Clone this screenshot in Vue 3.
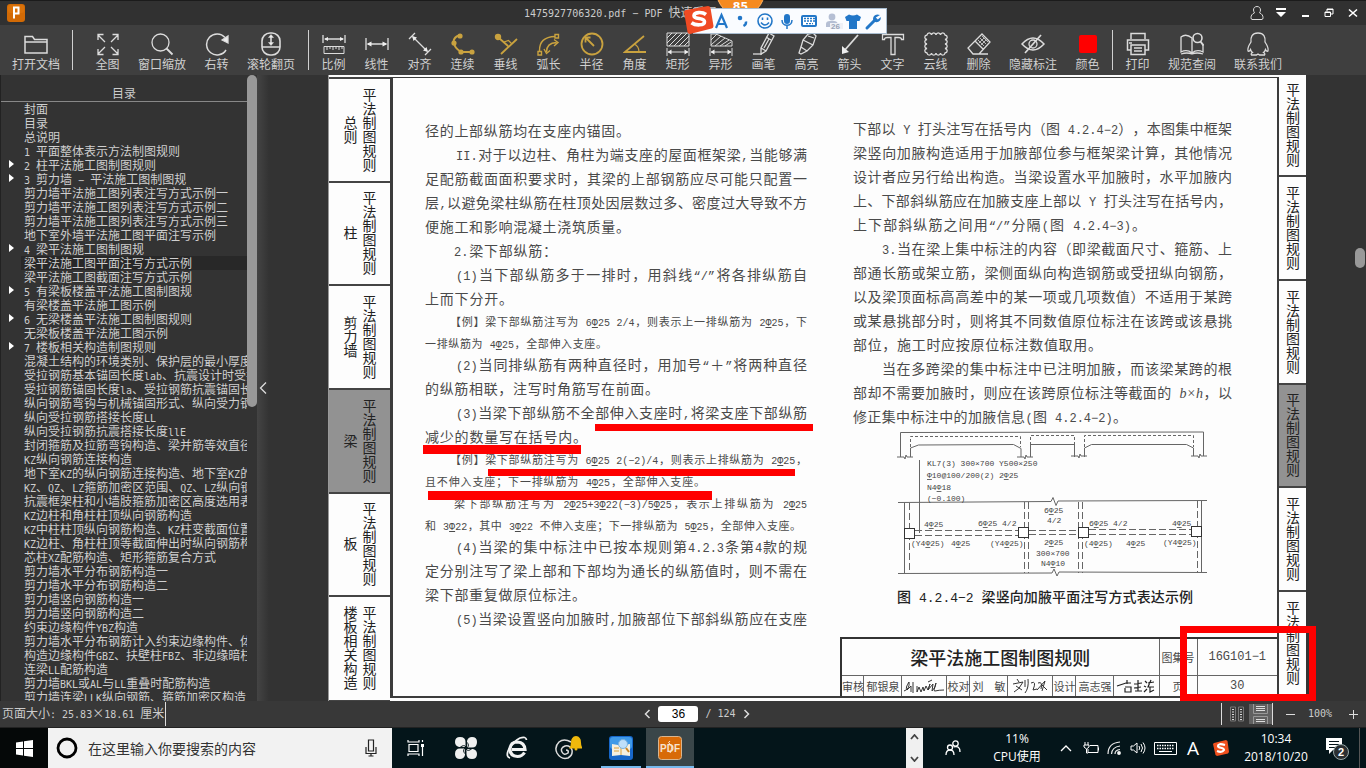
<script setup>
import { ref } from 'vue'

const page = ref('36')
const query = ref('')

const pattern = /Φ|b×h|(?:(?!b×h)[\x20-\x7e−“”])+|[^\x20-\x7e−“”Φ]+/g
function runs(text) {
  return (text.match(pattern) || []).map((t) => ({
    t,
    k: t === 'Φ' ? 'bar' : t === 'b×h' ? 'math' : /^[\x20-\x7e−“”]/.test(t) ? 'lat' : 'han'
  }))
}

const Y = '#c9a23f'
const groupOpen = [{ id: 'open', label: '打开文档', wide: true }]
const groupView = [
  { id: 'full', label: '全图' },
  { id: 'zoom', label: '窗口缩放', wide: true },
  { id: 'rotate', label: '右转' },
  { id: 'mouse', label: '滚轮翻页', wide: true }
]
const groupTools = [
  { id: 'scale', label: '比例' },
  { id: 'linear', label: '线性' },
  { id: 'align', label: '对齐' },
  { id: 'chain', label: '连续' },
  { id: 'perp', label: '垂线' },
  { id: 'arc', label: '弧长' },
  { id: 'radius', label: '半径' },
  { id: 'angle', label: '角度' },
  { id: 'rect', label: '矩形' },
  { id: 'poly', label: '异形' },
  { id: 'pen', label: '画笔' },
  { id: 'marker', label: '高亮' },
  { id: 'arrow', label: '箭头' },
  { id: 'text', label: '文字' },
  { id: 'cloud', label: '云线' },
  { id: 'erase', label: '删除' },
  { id: 'hide', label: '隐藏标注', wide: true },
  { id: 'color', label: '颜色' }
]
const groupEnd = [
  { id: 'print', label: '打印' },
  { id: 'book', label: '规范查阅', wide: true },
  { id: 'contact', label: '联系我们', wide: true }
]
const groups = [groupOpen, groupView, groupTools, groupEnd]

const outline = [
  '封面', '目录', '总说明', '1 平面整体表示方法制图规则', '>2 柱平法施工图制图规则',
  '>3 剪力墙 − 平法施工图制图规', '剪力墙平法施工图列表注写方式示例一', '剪力墙平法施工图列表注写方式示例二',
  '剪力墙平法施工图列表注写方式示例三', '地下室外墙平法施工图平面注写示例', '>4 梁平法施工图制图规',
  '梁平法施工图平面注写方式示例', '梁平法施工图截面注写方式示例', '>5 有梁板楼盖平法施工图制图规',
  '有梁楼盖平法施工图示例', '>6 无梁楼盖平法施工图制图规则', '无梁板楼盖平法施工图示例',
  '>7 楼板相关构造制图规则', '混凝土结构的环境类别、保护层的最小厚度', '受拉钢筋基本锚固长度lab、抗震设计时受拉',
  '受拉钢筋锚固长度la、受拉钢筋抗震锚固长度', '纵向钢筋弯钩与机械锚固形式、纵向受力钢筋', '纵向受拉钢筋搭接长度LL',
  '纵向受拉钢筋抗震搭接长度llE', '封闭箍筋及拉筋弯钩构造、梁并筋等效直径', 'KZ纵向钢筋连接构造',
  '地下室KZ的纵向钢筋连接构造、地下室KZ的', 'KZ、QZ、LZ箍筋加密区范围、QZ、LZ纵向钢筋', '抗震框架柱和小墙肢箍筋加密区高度选用表',
  'KZ边柱和角柱柱顶纵向钢筋构造', 'KZ中柱柱顶纵向钢筋构造、KZ柱变截面位置', 'KZ边柱、角柱柱顶等截面伸出时纵向钢筋构造',
  '芯柱XZ配筋构造、矩形箍筋复合方式', '剪力墙水平分布钢筋构造一', '剪力墙水平分布钢筋构造二', '剪力墙竖向钢筋构造一',
  '剪力墙竖向钢筋构造二', '约束边缘构件YBZ构造', '剪力墙水平分布钢筋计入约束边缘构件、体积', '构造边缘构件GBZ、扶壁柱FBZ、非边缘暗柱',
  '连梁LL配筋构造', '剪力墙BKL或AL与LL重叠时配筋构造', '剪力墙连梁LLK纵向钢筋、箍筋加密区构造'
].map((s, i) => ({ text: s.replace('>', ''), parent: s[0] === '>', active: i === 11 }))

const leftTabs = ['总则', '柱', '剪力墙', '梁', '板', '楼板相关构造']

/* t: text, i: indent, w: width of the set line, s: small print */
const leftLines = [
  { t: '径的上部纵筋均在支座内锚固。', w: 205 },
  { t: 'II.对于以边柱、角柱为端支座的屋面框架梁,当能够满', i: 31, w: 382 },
  { t: '足配筋截面面积要求时，其梁的上部钢筋应尽可能只配置一', w: 382 },
  { t: '层,以避免梁柱纵筋在柱顶处因层数过多、密度过大导致不方', w: 382 },
  { t: '便施工和影响混凝土浇筑质量。', w: 205 },
  { t: '2.梁下部纵筋：', i: 29, w: 132 },
  { t: '(1)当下部纵筋多于一排时，用斜线“/”将各排纵筋自', i: 31, w: 382 },
  { t: '上而下分开。', w: 88 },
  { t: '【例】梁下部纵筋注写为 6Φ25 2/4，则表示上一排纵筋为 2Φ25，下', i: 25, w: 382, s: true },
  { t: '一排纵筋为 4Φ25，全部伸入支座。', w: 182, s: true },
  { t: '(2)当同排纵筋有两种直径时，用加号“＋”将两种直径', i: 31, w: 382 },
  { t: '的纵筋相联，注写时角筋写在前面。', w: 234 },
  { t: '(3)当梁下部纵筋不全部伸入支座时,将梁支座下部纵筋', i: 31, w: 382 },
  { t: '减少的数量写在括号内。', w: 162 },
  { t: '【例】梁下部纵筋注写为 6Φ25 2(−2)/4，则表示上排纵筋为 2Φ25，', i: 25, w: 382, s: true },
  { t: '且不伸入支座；下一排纵筋为 4Φ25，全部伸入支座。', w: 280, s: true },
  { t: '梁下部纵筋注写为 2Φ25+3Φ22(−3)/5Φ25，表示上排纵筋为 2Φ25', i: 29, w: 382, s: true },
  { t: '和 3Φ22，其中 3Φ22 不伸入支座；下一排纵筋为 5Φ25，全部伸入支座。', w: 376, s: true },
  { t: '(4)当梁的集中标注中已按本规则第4.2.3条第4款的规', i: 31, w: 382 },
  { t: '定分别注写了梁上部和下部均为通长的纵筋值时，则不需在', w: 382 },
  { t: '梁下部重复做原位标注。', w: 161 },
  { t: '(5)当梁设置竖向加腋时,加腋部位下部斜纵筋应在支座', i: 31, w: 382 }
]
const rightLines = [
  { t: '下部以 Y 打头注写在括号内（图 4.2.4−2），本图集中框架', w: 379 },
  { t: '梁竖向加腋构造适用于加腋部位参与框架梁计算，其他情况', w: 379 },
  { t: '设计者应另行给出构造。当梁设置水平加腋时，水平加腋内', w: 379 },
  { t: '上、下部斜纵筋应在加腋支座上部以 Y 打头注写在括号内，', w: 379 },
  { t: '上下部斜纵筋之间用“/”分隔(图 4.2.4−3)。', w: 293 },
  { t: '3.当在梁上集中标注的内容（即梁截面尺寸、箍筋、上', i: 29, w: 379 },
  { t: '部通长筋或架立筋，梁侧面纵向构造钢筋或受扭纵向钢筋，', w: 379 },
  { t: '以及梁顶面标高高差中的某一项或几项数值）不适用于某跨', w: 379 },
  { t: '或某悬挑部分时，则将其不同数值原位标注在该跨或该悬挑', w: 379 },
  { t: '部位，施工时应按原位标注数值取用。', w: 249 },
  { t: '当在多跨梁的集中标注中已注明加腋，而该梁某跨的根', i: 29, w: 379 },
  { t: '部却不需要加腋时，则应在该跨原位标注等截面的 b×h，以', w: 379 },
  { t: '修正集中标注中的加腋信息(图 4.2.4−2)。', w: 274 }
]
const columns = [leftLines, rightLines]

const notes = [
  [927, 467, 'KL7(3) 300×700 Y500×250'], [927, 479, 'Φ10@100/200(2) 2Φ25'], [927, 491, 'N4Φ18'], [927, 502, '(−0.100)'],
  [924, 528, '4Φ25'], [978, 527, '6Φ25 4/2'], [1044, 514, '6Φ25'], [1047, 524, '4/2'], [1089, 527, '6Φ25 4/2'], [1172, 527, '4Φ25'],
  [911, 547, '(Y4Φ25)'], [951, 547, '4Φ25'], [990, 547, '(Y4Φ25)'], [1044, 546, '2Φ25'], [1084, 547, '(4Φ25)'],
  [1126, 547, '4Φ25'], [1163, 546, '(Y4Φ25)'], [1036, 557, '300×700'], [1041, 567, 'N4Φ10']
]
</script>

<template>
  <div class="app">
    <header class="titlebar">
      <svg class="logo" width="18" height="18" viewBox="0 0 18 18">
        <rect width="18" height="18" rx="3" fill="#d26a05" />
        <rect x="1" y="1" width="16" height="8" rx="2" fill="#e27a10" opacity=".5" />
        <path d="M7 14.500V3.500h4.500v6H7" fill="none" stroke="#fff" stroke-width="2" />
      </svg>
      <h1 class="title"><span v-for="(r, i) in runs('1475927706320.pdf − PDF 快速看图')" :key="i" :class="r.k">{{ r.t }}</span></h1>
      <div class="winbtns">
        <button aria-label="用户"><svg width="14" height="16" viewBox="0 0 14 16" fill="none" stroke="#ddd"><path d="M7 1.500c-2.200 0-3.500 1.500-3.500 3.500 0 1.200.5 2 1 2.800C2 9 1 10.500 1 12.500q0 2 1 2h10q1 0 1-2c0-2-1-3.500-3.500-4.700.5-.8 1-1.600 1-2.800 0-2-1.300-3.500-3.500-3.500z" /></svg></button>
        <button aria-label="菜单"><svg width="12" height="10" viewBox="0 0 12 10" fill="#fff"><path d="M1 0h10v2H1zM1 4h10L6 9z" /></svg></button>
        <button aria-label="最小化"><svg width="12" height="10" viewBox="0 0 12 10" fill="#fff"><path d="M3 7h7v2H3z" /></svg></button>
        <button aria-label="还原"><svg width="10" height="10" viewBox="0 0 10 10" fill="none" stroke="#fff"><path d="M3 3.500V1h6v5H7M3 1.500h6M1 4h5.500v4.500H1zM1 4.500h5.500" /></svg></button>
        <button aria-label="关闭"><svg width="10" height="10" viewBox="0 0 10 10" fill="none" stroke="#fff" stroke-width="1.600"><path d="M1 1.500l8 7M9 1.500l-8 7" /></svg></button>
      </div>
      <div class="badge">85</div>
      <div class="ime">
        <svg width="204" height="32" viewBox="0 0 204 32" fill="none">
          <path d="M3 7l22-4q2 0 2.500 2l3 18q0 2-2 2.500L7 31q-2 0-2.500-2L1 9q0-1.500 2-2z" fill="#f04a23" />
          <path d="M23 11.500c-4-3-12-2.500-12 1.200 0 4.300 10.500 1.300 10.500 6 0 4-9 4-13 1" stroke="#fff" stroke-width="3.600" />
          <g stroke="#2277c8" stroke-width="2">
            <path d="M33 25l5.500-13L44 25M35 21h7" stroke-width="2.200" />
            <circle cx="57" cy="15" r="1.300" fill="#2277c8" /><path d="M63 18.500q.5 3-2.500 4.500" stroke-width="2.400" />
            <circle cx="82" cy="18" r="7" stroke-width="1.600" /><path d="M78 19.500q4 5 8 0" stroke-width="1.500" /><path d="M79.500 14.500v2.500M84.500 14.500v2.500" stroke-width="1.600" />
            <rect x="102" y="12" width="4" height="8" rx="2" fill="#2277c8" /><path d="M99 17c0 7 10 7 10 0M104 22.500v3.500" stroke-width="1.500" />
            <rect x="119" y="13" width="14" height="10" rx="1" fill="#fff" /><path d="M121 15.500h11M121 18h11M123 20.600h7" stroke-width="1.300" stroke-dasharray="2 1" />
          </g>
          <g fill="#b5bfd4"><circle cx="149" cy="14" r="3.400" /><path d="M143 24v-3q0-3 4-3h4q3 0 4 3v3z" /></g>
          <rect x="147" y="20" width="13" height="6" fill="#eef0f6" />
          <text x="148" y="26" font-size="8" font-weight="700" fill="#98a3b8">26</text>
          <path d="M162 14l4-2.500q4 2 8 0l4 2.500-1.500 4h-2.500v8h-8v-8h-2.500z" fill="#2277c8" />
          <path d="M184 25l7-7" stroke="#2277c8" stroke-width="3" stroke-linecap="round" />
          <path d="M197 12q-4-1.500-6 1-2 3 0 5.500 3.500 2 6-1 1-1.500.8-3.500l-3 2.500-2-2z" fill="#2277c8" />
        </svg>
      </div>
    </header>

    <nav class="toolbar">
      <div v-for="(g, gi) in groups" :key="gi" class="group">
        <button v-for="t in g" :key="t.id" class="tool" :class="{ wide: t.wide }">
          <svg width="24" height="24" viewBox="0 0 24 24" fill="none" stroke="#dcdcdc" stroke-width="1.300">
            <g v-if="t.id === 'open'"><path d="M1 21V4.500h7.500l2 3H23V21zM1 10h22" stroke-width="1.500" /></g>
            <g v-else-if="t.id === 'full'"><path d="M9 10L2 3M2 8V2.500h5.500M15 10l7-7M16.500 2.500H22V8M9 15l-7 7M2 17v5.500h5.500M15 15l7 7M16.500 22.500H22V17" /></g>
            <g v-else-if="t.id === 'zoom'"><circle cx="10.500" cy="10.500" r="8.500" /><path d="M16.500 16.500l6 6" stroke-width="1.800" /></g>
            <g v-else-if="t.id === 'rotate'"><path d="M20 5.500A10.500 10.500 0 1 0 21 18" stroke-width="1.500" /><path d="M17 8l6-4v7z" fill="#eee" /></g>
            <g v-else-if="t.id === 'mouse'"><rect x="3" y="1" width="18" height="22" rx="8" stroke-width="1.600" /><path d="M3 15h18M12 4v8" stroke-width="1.600" /><path d="M9.500 5.500L12 2.500l2.500 3zM9.500 10.500l2.500 3 2.500-3z" fill="#eee" stroke-width=".5" /></g>
            <g v-else-if="t.id === 'scale'"><path d="M1 3v8M23 3v8M3 7h18" /><path d="M2 7l4-2v4zM22 7l-4-2v4z" fill="#eee" stroke="none" /><path d="M2 14.500h20v7H2zM5 15v3M8 15v2M11 15v3M14 15v2M17 15v3M20 15v2" stroke-width="1" /></g>
            <g v-else-if="t.id === 'linear'"><path d="M1 6v12M23 6v12M3 12h18" /><path d="M1.500 12l5-2.500v5zM22.500 12l-5-2.500v5z" fill="#eee" stroke="none" /></g>
            <g v-else-if="t.id === 'align'"><path d="M1 7l6-6M17 23l6-6M5 5l14 14" /><path d="M4 4l5 1.500L5.500 9zM20 20l-5-1.500 3.500-3.500z" fill="#eee" stroke="none" /></g>
            <g v-else-if="t.id === 'chain'" :stroke="Y"><path d="M8 3.500Q3 5 2.500 9.500q.5 6 7.500 10.500h11" stroke-width="2" /><g :fill="Y" stroke="none"><circle cx="9" cy="4" r="2.600" /><circle cx="3" cy="11" r="2.600" /><circle cx="10" cy="20" r="2.600" /><circle cx="21" cy="20" r="2.600" /></g></g>
            <g v-else-if="t.id === 'perp'" :stroke="Y" stroke-width="1.800"><circle cx="4" cy="5" r="2.300" :fill="Y" /><path d="M5 6l9 8M7 22L23 7" /><path d="M10 10l4.500-1.500L18 12" stroke-width="1.200" /></g>
            <g v-else-if="t.id === 'arc'" :stroke="Y" stroke-width="1.400"><path d="M2.500 19Q2 5 18 4.500" /><path d="M1 19.500h3.500V23H1zM18 2.500h3.500V6H18z" /><path d="M9.500 20q0-9 10-9.500M7 17l2.500 4.500 3.500-3M17 7.500l4 3-4 3.500" /></g>
            <g v-else-if="t.id === 'radius'" :stroke="Y"><circle cx="12" cy="12" r="10.500" stroke-width="1.800" /><path d="M14 14L6 6M5.500 10.500V5.500h5" stroke-width="1.800" /></g>
            <g v-else-if="t.id === 'angle'" :stroke="Y" stroke-width="1.800"><path d="M21 4L2 20h21" /><path d="M11 12q5 2 5 8" stroke-width="1.200" /></g>
            <g v-else-if="t.id === 'rect'" stroke-width="1"><path d="M1 1h22v13H1zM1 6l5-5M1 11L11 1M3 14L16 1M8 14L21 1M13 14L23 4M18 14l5-5M1 16v8M23 16v8M2 20h20" /><path d="M1.500 20l4-2.500v5zM22.500 20l-4-2.500v5z" fill="#eee" stroke="none" /></g>
            <g v-else-if="t.id === 'poly'" stroke-width="1"><path d="M2 14V2h5l16 7v5zM2 8l6-6M2 13L12 4M6 14l10-8M11 14l9-6M16 14l6-4M1 16v8M23 16v8M2 20h20" /><path d="M1.500 20l4-2.500v5zM22.500 20l-4-2.500v5z" fill="#eee" stroke="none" /></g>
            <g v-else-if="t.id === 'pen'"><path d="M17 1l5 3-8 15-5 3V16zM9 16l5 3M14 5l5 3M17 7l-5 9" /><path d="M1 22h9" /></g>
            <g v-else-if="t.id === 'marker'"><path d="M13 2l5-1 3 3-3 9-6 6-6-4 2-7zM8 8l10 5M6 15l-2 6 2 1 6-3M13 4l6 2" /></g>
            <g v-else-if="t.id === 'arrow'"><path d="M20 3L6 19" stroke-width="1.800" /><path d="M4 22V14l7 6z" fill="#eee" stroke="none" /></g>
            <g v-else-if="t.id === 'text'"><path d="M1.500 2.500h21v5h-2q0-2-3-2h-3.500v17h-4v-17H6.500q-3 0-3 2h-2z" /></g>
            <g v-else-if="t.id === 'cloud'"><path d="M3 3a2.300 2.800 0 0 1 4.500 0a2.300 2.800 0 0 1 4.500 0a2.300 2.800 0 0 1 4.500 0a2.300 2.800 0 0 1 4.500 0a2.800 2.300 0 0 1 0 4.500a2.800 2.300 0 0 1 0 4.500a2.800 2.300 0 0 1 0 4.500a2.800 2.300 0 0 1 0 4.500a2.300 2.800 0 0 1-4.500 0a2.300 2.800 0 0 1-4.500 0a2.300 2.800 0 0 1-4.500 0a2.300 2.800 0 0 1-4.500 0a2.800 2.300 0 0 1 0-4.500a2.800 2.300 0 0 1 0-4.500a2.800 2.300 0 0 1 0-4.500a2.800 2.300 0 0 1 0-4.500z" /></g>
            <g v-else-if="t.id === 'erase'"><path d="M15 2l8 8-11 12H6l-5-6zM8 9l8 8M11 22h10" /><path d="M11 8l6 6M13 6l6 6M15 4l6 6M17 6l-5 5M19 8l-5 5" stroke-width=".8" /></g>
            <g v-else-if="t.id === 'hide'"><path d="M1 12Q12 0 23 12 12 24 1 12z" stroke-width="1.500" /><circle cx="12" cy="12" r="4" /><path d="M20 3L4 21" stroke-width="1.700" /></g>
            <g v-else-if="t.id === 'color'"><rect x="3" y="3" width="18" height="18" rx="2" fill="#f00" stroke="none" /></g>
            <g v-else-if="t.id === 'print'" stroke-width="1.500"><path d="M5 7V1.500h14V7M5 18H1.500V8h21v10H19M5 13h14v9.500H5zM3 11h3M8 16h8M8 19h8" /></g>
            <g v-else-if="t.id === 'book'"><path d="M12 6Q6 1 1 5v15q6-3 11 1 5-4 11-1v-7M12 6v15M1 22q6-2 11 0 5-2 11 0" /><circle cx="17.500" cy="6" r="4.500" stroke-width="1.600" /><path d="M20.500 9.500l3 4" stroke-width="2" /></g>
            <g v-else><path d="M12 1C6 1 4.500 5 5 10c-2 3-4 6-3 9q1 1 2.500-1.500 .5 2 2 3-2 1-1 2.500h5l1.500-1 1.500 1h5q1-1.500-1-2.500 1.500-1 2-3Q21 20 22 19c1-3-1-6-3-9 .5-5-1-9-7-9z" /></g>
          </svg>
          <span>{{ t.label }}</span>
        </button>
      </div>
    </nav>

    <main class="main">
      <aside class="sidebar">
        <h2>目录</h2>
        <ul>
          <li v-for="(o, i) in outline" :key="i" :class="{ parent: o.parent }">
            <a href="#" :class="{ active: o.active }"><span v-for="(r, j) in runs(o.text)" :key="j" :class="r.k">{{ r.t }}</span></a>
          </li>
        </ul>
      </aside>
      <div class="track"><div class="thumb"></div></div>
      <div class="gutter">
        <button aria-label="收起目录"><svg width="8" height="14" viewBox="0 0 8 14" fill="none" stroke="#ddd" stroke-width="1.300"><path d="M7 1.500L1.500 7 7 12.500" /></svg></button>
      </div>

      <article class="page">
        <div class="tabs left">
          <div v-for="t in leftTabs" :key="t" class="tab" :class="{ on: t === '梁' }"><p>平法制图规则<br />{{ t }}</p></div>
        </div>
        <section class="sheet">
          <div class="cols">
            <div v-for="(col, c) in columns" :key="c" class="col" :class="{ second: c === 1 }">
              <p v-for="(l, i) in col" :key="i" :class="{ small: l.s }" :style="{ paddingLeft: (l.i || 0) + 'px', width: l.w + 'px' }"><span v-for="(r, j) in runs(l.t)" :key="j" :class="r.k">{{ r.t }}</span></p>
              <figure v-if="c === 1">
                <svg width="312" height="148" viewBox="897 430 312 148" fill="none" stroke="#666" stroke-width="1">
                  <path d="M900.500 458V433.500L1203.500 433v24M910.500 458v-9l8-3 95-.5 7.500 4V458M1030.500 458V445.500h44V458M1084.500 458v-9l7-3.500h95l7 3.500v8M897 458h7l1 2 1-4 1 2h6M1017 458h7l1 2 1-4 1 2h6M1071 457h7l1 2 1-4 1 2h6M1191 457h7l1 2 1-4 1 2h6" />
                  <path d="M910.500 448v-10.500H1020.500V448M1030.500 446v-9.500h44v9.500M1084.500 448v-11.500H1193.500V448" stroke-dasharray="3 2" />
                  <path d="M919.500 461V534M898 503.500l153-1 2-4 3 8 2-4.500 149-.5M898 574.500l154-.5 2-4 3 7 2-4 148 .5M904.500 504v70M1201.500 502v71" />
                  <path d="M909.500 504v70M1024.500 503v71M1028.500 503v71M1078.500 503v71M1082.500 503v71M1197.500 502v71" stroke-dasharray="7 3" />
                  <path d="M915 531.500h104M915 536.500h104M1029 531.500h49M1029 535.500h49M1089 530.500h102M1089 535.500h102" stroke-dasharray="7 3" />
                  <g fill="#fff" stroke="#333"><rect x="904.500" y="529.500" width="10" height="10" /><rect x="1018.500" y="528.500" width="10" height="10" /><rect x="1078.500" y="528.500" width="10" height="10" /><rect x="1191.500" y="527.500" width="10" height="10" /></g>
                  <g class="notes"><text v-for="(n, i) in notes" :key="i" :x="n[0]" :y="n[1]"><tspan v-for="(r, j) in runs(n[2])" :key="j" :class="r.k">{{ r.t }}</tspan></text></g>
                </svg>
                <figcaption><span v-for="(r, j) in runs('图 4.2.4−2 梁竖向加腋平面注写方式表达示例')" :key="j" :class="r.k">{{ r.t }}</span></figcaption>
              </figure>
            </div>
          </div>
          <table>
            <colgroup><col class="c23" /><col class="c38" /><col class="c45" /><col class="c23" /><col class="c38" /><col class="c45" /><col class="c23" /><col class="c38" /><col class="c45" /><col class="c38" /><col class="c80" /></colgroup>
            <tbody>
              <tr class="top"><th colspan="9">梁平法施工图制图规则</th><td>图集号</td><td class="num">16G101−1</td></tr>
              <tr>
                <td>审核</td><td>郁银泉</td>
                <td><svg width="42" height="16" viewBox="0 0 42 16" fill="none" stroke="#333"><path d="M1 13q6-2 5-9-4 6-2 8l4-4v6M10 4v11M14 8v6l2-5 2 5 2-5 1 4 2-5 2 4 2-6M25 4l4-2M27 6l-2 6 5-6-1 7q4-4 4-8-3 9-1 8 4-1 9-1" /></svg></td>
                <td>校对</td><td>刘&#12288;敏</td>
                <td><svg width="36" height="16" viewBox="0 0 36 16" fill="none" stroke="#333"><path d="M5 1l2 3M1 6l10-2Q7 12 2 14M4 8l6 4M13 2v7M16 1q1 9-3 14M19 5q6-3 2 7l4-1M26 5q5-2 3 6M25 12l8-9-3 10M29 6l6 6" /></svg></td>
                <td>设计</td><td>高志强</td>
                <td><svg width="40" height="16" viewBox="0 0 40 16" fill="none" stroke="#222" stroke-width="1.200"><path d="M1 8l9-3h5M11 2v4M9 9h6v5H9v-4M18 6l8-1M22 2v11M19 13h7M18 10l7-1M29 3l2 2M28 8l2 1M28 14l3-3M32 5l6-1M35 2l-3 7h6M34 9v5l4-2" /></svg></td>
                <td>页</td><td class="num">30</td>
              </tr>
            </tbody>
          </table>
        </section>
        <div class="tabs right">
          <div v-for="n in 6" :key="n" class="tab" :class="{ on: n === 4 }"><p>平法制图规则</p></div>
        </div>
        <div class="mark m1"></div><div class="mark m2"></div><div class="mark m3"></div><div class="mark m4"></div>
        <div class="frame"></div>
      </article>
      <div class="rail"><div class="knob"></div></div>
    </main>

    <footer class="status">
      <span class="size"><span v-for="(r, i) in runs('页面大小: 25.83×18.61 厘米')" :key="i" :class="r.k">{{ r.t }}</span></span>
      <div class="pager">
        <button aria-label="上一页"><svg width="7" height="10" viewBox="0 0 7 10" fill="none" stroke="#ddd" stroke-width="1.500"><path d="M5.500 1L1.500 5l4 4" /></svg></button>
        <input v-model="page" aria-label="页码" />
        <span class="lat">/ 124</span>
        <button aria-label="下一页"><svg width="7" height="10" viewBox="0 0 7 10" fill="none" stroke="#ddd" stroke-width="1.500"><path d="M1.500 1l4 4-4 4" /></svg></button>
      </div>
      <div class="zoomer">
        <button class="v1" aria-label="双页"><svg width="16" height="16" viewBox="0 0 16 16" fill="none" stroke="#999"><path d="M1.500 1h5v14h-5zM9.500 1h5v14h-5z" stroke="#777" /><path d="M4 3v11M12 3v11" stroke="#ddd" stroke-width="2" stroke-dasharray="1 1.500" /></svg></button>
        <button class="v2" aria-label="单页"><svg width="23" height="20" viewBox="0 0 23 20" fill="none" stroke="#aaa"><path d="M4.500 0v9.500h14V0M4.500 20v-7.500h14V20" stroke="#999" /><path d="M7 2.500h9M7 4.500h9M7 6.500h9M7 15.500h9M7 17.500h9" stroke="#ddd" /></svg></button>
        <button class="v3" aria-label="缩小"><svg width="11" height="11" viewBox="0 0 11 11" stroke="#ddd"><path d="M1 5.500h9" /></svg></button>
        <span class="lat pct">100%</span>
        <button class="v4" aria-label="放大"><svg width="11" height="11" viewBox="0 0 11 11" stroke="#ddd"><path d="M1 5.500h9M5.500 1v9" /></svg></button>
      </div>
    </footer>

    <div class="taskbar">
      <button class="start" aria-label="开始"><svg width="17" height="17" viewBox="0 0 17 17" fill="#fff"><path d="M0 2.500l7-1V8H0zM8 1.300L17 0v8H8zM0 9h7v6.500l-7-1zM8 9h9v8l-9-1.300z" /></svg></button>
      <label class="search">
        <svg width="22" height="22" viewBox="0 0 22 22" fill="none"><circle cx="11" cy="11" r="9" stroke="#000" stroke-width="2.800" /></svg>
        <input v-model="query" placeholder="在这里输入你要搜索的内容" aria-label="搜索" />
        <svg width="12" height="18" viewBox="0 0 12 18" fill="none" stroke="#222" stroke-width="1.200"><path d="M3.500 1h5v11h-5zM1 8v6.500h10V8M6 14.500V17M3.500 17h5" /></svg>
      </label>
      <button class="t48" aria-label="任务视图"><svg width="18" height="16" viewBox="0 0 18 16" fill="none" stroke="#fff" stroke-width="1.200"><path d="M2 4.500h9v7H2zM1 0v2h11V0M1 16v-2h11v2M15.500 0v2M15.500 7v9" /><path d="M14 4h3v3h-3z" fill="#fff" stroke="none" /></svg></button>
      <button class="t52" aria-label="浏览器"><svg width="22" height="22" viewBox="0 0 22 22" fill="#f0f0f0"><path d="M10.500 10H4Q0 9 0 5q0-5 5-5 5.500 0 5.500 5z" /><path d="M12 10.500V4q1-4 5-4 5 0 5 5 0 5.500-5 5.500z" /><path d="M11.500 12H18q4 1 4 5 0 5-5 5-5.500 0-5.500-5z" /><path d="M10 11.500V18q-1 4-5 4-5 0-5-5 0-5.500 5-5.500z" /><path d="M5 10.500q4-3.500 6-.5M11.500 5q3.500 3 .5 6M17 11.500q-4 3.500-6 .5M10.500 17q-3.500-3-.5-6" fill="none" stroke="#06151a" stroke-width="1" /></svg></button>
      <button class="t52" aria-label="Internet Explorer"><svg width="22" height="24" viewBox="0 0 22 24" fill="none" stroke="#f2f2f2"><path d="M18.500 16.500Q16 20.500 11.500 20.500 4 20 4 13q.5-7 7.500-7 7 .5 7.500 7.500H6" stroke-width="3.200" /><path d="M4 22q-4-1-2-7Q6 6 14 2q6-2 6.500 2" stroke-width="1.800" /></svg></button>
      <button class="t52" aria-label="游戏"><svg width="28" height="26" viewBox="0 0 28 26" fill="none" stroke="#ddd" stroke-width="1.500"><path d="M17 7Q10 3 5 7 0 12 3 18q4 7 11 5 5-3 4-8-2-5-7-4-5 2-3 6 2 4 6 1 1-3-2-3" /><path d="M15 13.500q2-2 2-6 0-6 5-6.500 5 .5 5 6.500 0 4 2 6z" fill="#f0b90c" stroke="none" /><circle cx="22" cy="14" r="1.500" fill="#f0b90c" stroke="none" /></svg></button>
      <button class="t52 open" aria-label="看图"><svg width="24" height="24" viewBox="0 0 24 24"><rect width="24" height="24" rx="3" fill="#1767c9" /><rect x="1" y="1" width="22" height="12" rx="3" fill="#3f9ae8" /><path d="M3 8l9 1.500L21 8v12l-9-1-9 1z" fill="#f4efe0" /><path d="M12 9v10M5 12h5M5 15h5" stroke="#d9a13a" /><circle cx="14" cy="8" r="4.500" fill="#bfe0fa" stroke="#7ab3e0" /><path d="M17 12l3 4" stroke="#c98524" stroke-width="2" /></svg></button>
      <button class="t48 open current" aria-label="PDF"><svg width="24" height="24" viewBox="0 0 24 24"><rect x=".5" y=".5" width="23" height="23" rx="3" fill="#d86a08" stroke="#d8b58f" /><text x="12" y="16" text-anchor="middle" font-size="10" font-weight="700" fill="#f7e3cf">PDF</text><path d="M12 5q-3 2 0 3 3 3 0 9" stroke="#f7e3cf" fill="none" /></svg></button>
      <div class="tray">
        <div class="spin"><svg width="9" height="6" viewBox="0 0 9 6" fill="none" stroke="#444" stroke-width="1.800"><path d="M1 5l3.500-4L8 5" /></svg><svg width="9" height="6" viewBox="0 0 9 6" fill="none" stroke="#444" stroke-width="1.800"><path d="M1 1l3.500 4L8 1" /></svg></div>
        <button class="people" aria-label="人脉"><svg width="16" height="16" viewBox="0 0 16 16" fill="none" stroke="#fff" stroke-width="1.300"><circle cx="5" cy="7.500" r="2.500" /><path d="M1 15q0-5 4-5t4 5" /><circle cx="10.500" cy="3.500" r="2.700" /><path d="M8.500 7Q15 5 15 12" /></svg></button>
        <div class="cpu">11%<br />CPU使用</div>
        <button class="w30" aria-label="显示隐藏的图标"><svg width="12" height="7" viewBox="0 0 12 7" fill="none" stroke="#fff" stroke-width="1.300"><path d="M1 6l5-5 5 5" /></svg></button>
        <button class="w20" aria-label="电池"><svg width="17" height="14" viewBox="0 0 17 14" fill="none" stroke="#fff"><path d="M7 4.500h8v7H5V8M15.500 6.500v3M2 1v3M5 1v3M1 4h5v2L3.500 8 1 6zM3.500 8v4H5" /></svg></button>
        <button class="w26" aria-label="网络"><svg width="14" height="14" viewBox="0 0 14 14" fill="none" stroke="#eee" stroke-width="1.200"><path d="M1 13Q1 2 13 1M4.500 13Q5 6 13 5M8 13q0-4 5-4.500" /><circle cx="12" cy="12" r="1.300" fill="#fff" /></svg></button>
        <button class="w22" aria-label="音量"><svg width="16" height="14" viewBox="0 0 16 14" fill="none" stroke="#fff"><path d="M1 5h2.500L7 2v10L3.500 9H1zM9 5q1.500 2 0 4M11 3q3 4 0 8M13 1.500q4 5.500 0 11" /></svg></button>
        <button class="w32" aria-label="触摸键盘"><svg width="23" height="13" viewBox="0 0 23 13" fill="none" stroke="#fff"><path d="M.5.500h22v12H.5z" /><path d="M3 3.500h17M3 6.500h17" stroke-dasharray="1.500 1" stroke-width="1.300" /><path d="M5 9.500h13" /></svg></button>
        <span class="lang">A</span>
        <button class="w32" aria-label="输入法"><svg width="16" height="16" viewBox="0 0 16 16" fill="none"><path d="M1 3l12-3 1.500 1L16 12l-1 1.500L4 16l-1.500-1L0 4z" fill="#f0501e" /><path d="M12 5Q5 3 5 6c0 2.500 6 1 6 4q-2 3-7 1" stroke="#fff" stroke-width="2.200" /></svg></button>
        <div class="clock">10:34<br />2018/10/20</div>
        <button class="notif" aria-label="通知"><svg width="26" height="26" viewBox="0 0 26 26"><path d="M2 3h16v12H9l-4 4v-4H2z" fill="#fff" /><path d="M5 6.500h10M5 9.500h10M5 12.500h6" stroke="#06151a" /><circle cx="17" cy="17" r="7.500" fill="#2b2f31" stroke="#9aa" /><text x="17" y="21" text-anchor="middle" font-size="11" font-weight="700" fill="#fff">2</text></svg></button>
        <div class="peek"></div>
      </div>
    </div>
  </div>
</template>

<style>
html, body { margin: 0; background: #333; }
</style>

<style scoped>
.app { height: 100vh; display: flex; flex-direction: column; overflow: hidden; background: #333; color: #ccc; font: 12px/14px "Noto Sans CJK SC", sans-serif; }
* { box-sizing: border-box; }
button { border: 0; padding: 0; margin: 0; background: none; color: inherit; font: inherit; display: flex; align-items: center; justify-content: center; }
svg { display: block; flex: none; }
h1, h2, p, ul, figure { margin: 0; padding: 0; }
.lat { font-family: "DejaVu Sans Mono", monospace; font-size: 10px; white-space: pre; }

.titlebar { position: relative; flex: none; height: 25px; display: flex; align-items: center; background: #313131; border-top: 1px solid #1b1b1b; }
.logo { margin-left: 7px; }
.title { margin-left: 499px; font-size: 12px; font-weight: 400; line-height: 14px; white-space: pre; }
.winbtns { margin-left: auto; display: flex; padding-right: 1px; }
.winbtns button { width: 24px; height: 20px; }
.badge { position: absolute; left: 716px; top: -34px; width: 49px; height: 49px; border-radius: 50%; background: #f58a1f; border: 1px solid #ffb566; color: #fff; font: 700 11px/14px "DejaVu Sans", sans-serif; text-align: center; padding-top: 32px; }
.ime { position: absolute; left: 683px; top: 2px; width: 204px; height: 29px; z-index: 2; }
.ime::before { content: ""; position: absolute; left: 10px; top: 5px; right: 0; bottom: 0; height: 24px; background: #fafcff; border: 1px solid #a9bdd0; }
.ime svg { position: relative; }
.ime text { font-family: "Liberation Sans", sans-serif; }

.toolbar { flex: none; height: 50px; display: flex; background: #3f3f3f; }
.group { display: flex; padding: 0 3px; position: relative; }
.group + .group { border-left: 1px solid #d0d0d0; height: 40px; margin-top: 5px; }
.group + .group .tool { margin-top: -5px; }
.group:nth-child(2) { padding: 0 4px 0 13px; }
.tool { width: 43px; height: 50px; flex-direction: column; justify-content: flex-start; padding-top: 7px; gap: 1px; line-height: 14px; white-space: nowrap; color: #d0d0d0; }
.tool.wide { width: 66px; }

.main { flex: 1; min-height: 0; display: flex; overflow: hidden; background: #333; border-left: 1px solid #222; }
.sidebar { flex: none; width: 246px; overflow: hidden; }
.sidebar h2 { height: 27px; padding-top: 11px; border-bottom: 1px solid #888; font-size: 12px; line-height: 14px; font-weight: 400; text-align: center; }
.sidebar ul { list-style: none; }
.sidebar li { position: relative; padding-left: 20px; }
.sidebar li.parent::before { content: ""; position: absolute; left: 8px; top: 2px; border-left: 5px solid #fff; border-top: 4px solid transparent; border-bottom: 4px solid transparent; }
.sidebar a { display: block; height: 14px; padding-left: 3px; color: #cfcfcf; text-decoration: none; white-space: pre; }
.sidebar a.active { background: #282828; }
.track { flex: none; width: 10px; }
.thumb { height: 53%; background: #999; border-radius: 5px; }
.gutter { flex: none; width: 71px; background: linear-gradient(90deg, #444, #333 12px); display: flex; align-items: center; padding-left: 2px; }

.page { position: relative; flex: 1; min-width: 0; display: grid; grid-template-columns: 61px minmax(0, 1fr) 27px; background: #fdfdfd; color: #333; border-left: 1px solid #999; }
.tabs { display: grid; padding-bottom: 1px; }
.tabs.left { padding-top: 2px; grid-template-rows: repeat(6, 1fr); }
.tabs.right { grid-template-rows: 100fr repeat(5, 104fr); padding-bottom: 7px; }
.tab { display: flex; align-items: center; justify-content: center; border-top: 2px solid #444; min-height: 0; }
.tabs.right .tab:first-child { border-top: 0; }
.tabs.left { border-bottom: 1px solid #444; }
.tab.on { background: #929292; }
.tab p { writing-mode: vertical-rl; font-size: 14px; line-height: 19px; text-align: center; color: #222; }
.sheet { display: flex; flex-direction: column; margin: 2px 0 3px; border: 2px solid #3c3c3c; border-top-width: 1px; border-left-width: 3px; }
.cols { display: grid; grid-template-columns: 382fr 379fr; gap: 46px; padding: 40px 46px 0 32px; }
.col.second { margin-top: -2px; }
.col p { font-size: 14px; line-height: 24px; height: 24px; text-align: justify; text-align-last: justify; white-space: nowrap; color: #4a4a4a; text-spacing-trim: space-all; }
.col p .lat, .col p .bar { font-size: 12px; font-family: "Liberation Mono", monospace; white-space: nowrap; }
.col p.small { font-size: 11px; line-height: 22px; height: 22px; }
.col p.small + p:not(.small) { margin-top: -2px; }
.col p.small .lat, .col p.small .bar { font-size: 10px; }
.bar { text-decoration: underline; }
.math { font-family: "Liberation Serif", serif; font-style: italic; }
figure { padding-left: 44px; margin-top: 1px; }
.notes { stroke: none; fill: #444; font: 8px "Liberation Mono", monospace; }
.notes .lat { font: 8px "Liberation Mono", monospace; }
figcaption { width: 296px; margin-top: 7px; font-size: 14px; line-height: 24px; font-weight: 500; color: #222; text-align: justify; text-align-last: justify; white-space: nowrap; }
figcaption .lat { font: 13px "Liberation Mono", monospace; white-space: nowrap; }
table { align-self: flex-end; margin-top: auto; border-collapse: collapse; table-layout: fixed; width: 436px; border-left: 2px solid #333; border-top: 2px solid #333; }
.c23 { width: 23px; } .c38 { width: 38px; } .c45 { width: 45px; } .c80 { width: 80px; }
td, th { border: 1px solid #666; padding: 0; height: 21px; font-size: 11px; line-height: 14px; text-align: center; white-space: nowrap; color: #4a4a4a; }
td svg { margin: 0 auto; }
tr:last-child td { border-bottom: 0; }
td:last-child { border-right: 0; }
.top td, .top th { height: 37px; border-top: 2px solid #333; }
th { font-size: 18px; line-height: 24px; font-weight: 500; color: #222; }
td.num { font: 12px/14px "Liberation Mono", monospace; }
.mark { position: absolute; background: #f00; }
.m1 { left: 266px; top: 349px; width: 218px; height: 7px; }
.m2 { left: 94px; top: 370px; width: 158px; height: 9px; }
.m3 { left: 159px; top: 394px; width: 307px; height: 7px; }
.m4 { left: 99px; top: 416px; width: 284px; height: 9px; }
.frame { position: absolute; right: -10px; bottom: 0; width: 136px; height: 75px; border: 7px solid #f00; }
.rail { flex: none; width: 60px; position: relative; display: flex; justify-content: flex-end; padding: 173px 1px 0 0; }
.knob { width: 10px; height: 20px; border-radius: 5px; background: #999; }

.status { flex: none; height: 27px; display: grid; grid-template-columns: 1fr auto 1fr; align-items: center; background: #383838; border-bottom: 1px solid #222; }
.size { justify-self: start; padding: 0 1px 0 2px; border-right: 1px solid #ddd; line-height: 22px; white-space: pre; }
.pager { display: flex; align-items: center; gap: 7px; padding-left: 28px; }
.pager input { width: 40px; height: 16px; border: 0; border-radius: 3px; background: #fff; text-align: center; font: 12px "Liberation Sans", sans-serif; padding: 0; color: #000; }
.zoomer { justify-self: end; display: flex; align-items: center; height: 22px; border-left: 1px solid #ddd; }
.v1 { width: 27px; height: 20px; padding-left: 2px; }
.v2 { width: 23px; height: 20px; background: #616161; }
.v3 { width: 36px; height: 22px; border-left: 1px solid #ddd; }
.pct { width: 26px; }
.v4 { width: 32px; height: 22px; padding-left: 6px; }

.taskbar { flex: none; height: 40px; display: flex; background: #04151a; color: #fff; }
.start { width: 48px; background: #050808; }
.search { width: 344px; background: #f2f2f2; display: flex; align-items: center; padding: 0 15px 0 8px; gap: 10px; }
.search input { flex: 1; min-width: 0; border: 0; padding: 0; background: none; outline: 0; font: 14px/20px "Noto Sans CJK SC", sans-serif; color: #222; }
.search input::placeholder { color: #333; opacity: 1; }
.t48 { width: 48px; } .t52 { width: 51px; }
.open { border-bottom: 2px solid #76b9ed; padding-top: 2px; }
.t52.open { width: 40px; margin: 0 5px 0 8px; }
.current { background: #3a4649; }
.tray { margin-left: auto; display: flex; align-items: stretch; line-height: 18px; text-align: center; }
.spin { width: 17px; background: #f0f0f0; display: flex; flex-direction: column; justify-content: space-between; align-items: center; padding: 6px 0; }
.people { width: 60px; }
.cpu { width: 68px; padding-top: 2px; }
.clock { width: 78px; padding-top: 2px; white-space: nowrap; }
.cpu, .clock { font-family: "Open Sans", "Noto Sans CJK SC", sans-serif; font-size: 12px; }
.w30 { width: 30px; } .w20 { width: 20px; } .w26 { width: 26px; } .w22 { width: 22px; } .w32 { width: 32px; }
.lang { width: 24px; font: 19px/40px "Open Sans", sans-serif; }
.notif { width: 44px; }
.peek { width: 7px; border-left: 1px solid #555; }
.taskbar text { font-family: "Liberation Sans", sans-serif; }
</style>
